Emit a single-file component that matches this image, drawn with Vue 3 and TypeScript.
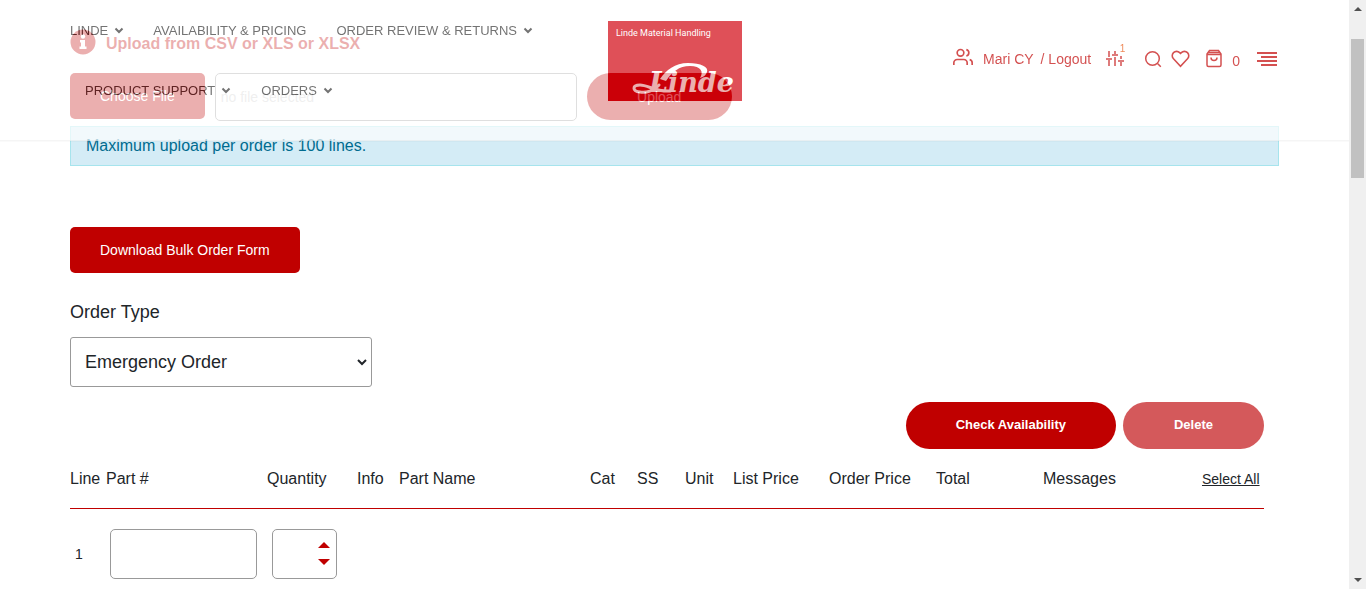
<script setup lang="ts">
import { ref } from 'vue'

interface NavItem { label: string; menu: boolean }
interface Column { label: string; width: number }

const nav: NavItem[] = [
  { label: 'LINDE', menu: true },
  { label: 'AVAILABILITY & PRICING', menu: false },
  { label: 'ORDER REVIEW & RETURNS', menu: true },
  { label: 'PRODUCT SUPPORT', menu: true },
  { label: 'ORDERS', menu: true },
]

const columns: Column[] = [
  { label: 'Line', width: 36 },
  { label: 'Part #', width: 161 },
  { label: 'Quantity', width: 90 },
  { label: 'Info', width: 42 },
  { label: 'Part Name', width: 191 },
  { label: 'Cat', width: 47 },
  { label: 'SS', width: 48 },
  { label: 'Unit', width: 48 },
  { label: 'List Price', width: 96 },
  { label: 'Order Price', width: 107 },
  { label: 'Total', width: 107 },
  { label: 'Messages', width: 159 },
]
const lastWidth = 62
const total = columns.reduce((sum, c) => sum + c.width, lastWidth)
const share = (w: number) => ({ width: (w / total) * 100 + '%' })

const orderType = ref('Emergency Order')
const part = ref('')
const quantity = ref<number | null>(null)
const fileName = ref('no file selected')

function step(by: number) {
  quantity.value = Math.max(0, (quantity.value || 0) + by)
}
function pick(e: Event) {
  const files = (e.target as HTMLInputElement).files
  fileName.value = files && files.length ? files[0].name : 'no file selected'
}
</script>

<template>
  <div class="page">
    <header class="header">
      <div class="bar">
        <nav aria-label="Main">
          <ul class="nav">
            <li v-for="item in nav" :key="item.label">
              <a href="#">{{ item.label }}
                <svg v-if="item.menu" class="chev" viewBox="0 0 10 8" width="10" height="8" aria-hidden="true">
                  <path d="M1.5 2.500 L5 6 L8.5 2.500" />
                </svg>
              </a>
            </li>
          </ul>
        </nav>

        <a href="#" class="logo" aria-label="Linde Material Handling">
          <svg viewBox="0 0 134 80" width="134" height="80">
            <rect width="134" height="80" fill="#d0000c" />
            <text x="8" y="15" class="logo-small">Linde Material Handling</text>
            <text x="41" y="71" class="logo-big">Linde</text>
            <path d="M52 58 C58 49 67 42 80 42 C93 42 101 46 99 51 C98 54 96 56 92 57 C96 51 93 45 82 45 C71 45 64 51 58 60 Z" fill="#fff" />
            <path d="M51 64 C46 70 38 72 32 71 C24 70 24 64 32 64 C40 64 48 71 62 70" fill="none" stroke="#fff" stroke-width="3" stroke-linecap="round" />
          </svg>
        </a>

        <div class="tools">
          <a href="#" class="user" aria-label="Account">
            <svg class="line bold" viewBox="0 0 24 24" width="20" height="20">
              <path d="M17 21.500v-2.500a4 4 0 0 0-4-4H5a4 4 0 0 0-4 4v2.500M23 21.500v-2.500a4 4 0 0 0-3-3.870M16 3.130a4 4 0 0 1 0 7.750" />
              <circle cx="9" cy="7" r="4" />
            </svg>
          </a>
          <a href="#" class="name">Mari CY</a>
          <a href="#" class="logout">/ Logout</a>
          <a href="#" class="compare" aria-label="Compare">
            <svg class="line" viewBox="0 0 20 20" width="20" height="20">
              <path d="M4 2v6M4 11v6M1 10h6M10 2v3M10 8v9M7 6h6M16 7v3M16 13v4M13 12h6" />
            </svg>
            <span class="badge">1</span>
          </a>
          <a href="#" class="search" aria-label="Search">
            <svg class="line" viewBox="0 0 18 18" width="18" height="18">
              <circle cx="8.500" cy="8.500" r="6.800" /><path d="M13.500 13.500L16.800 16.800" />
            </svg>
          </a>
          <a href="#" class="heart" aria-label="Wish list">
            <svg class="line bold" viewBox="0 0 24 24" width="19" height="19">
              <path d="M20.840 4.610a5.500 5.500 0 0 0-7.780 0L12 5.670l-1.060-1.060a5.500 5.500 0 0 0-7.780 7.780L12 21.800l8.840-9.410a5.500 5.500 0 0 0 0-7.780z" />
            </svg>
          </a>
          <a href="#" class="cart" aria-label="Cart">
            <svg class="line" viewBox="0 0 18 20" width="18" height="20">
              <path d="M4.500 1.500h9L16 5v11a1.500 1.500 0 0 1-1.500 1.500h-11A1.500 1.500 0 0 1 2 16V5zM2 5.500h14M3.500 3.500h11M6 8.500a3 3 0 0 0 6 0" />
            </svg>
            <span>0</span>
          </a>
          <button type="button" class="menu" aria-label="Menu">
            <svg viewBox="0 0 20 16" width="20" height="16">
              <path d="M0 2h20M4 6h16M0 10h20M4 14h16" stroke="#c00000" stroke-width="2" />
            </svg>
          </button>
        </div>
      </div>
    </header>

    <main class="content">
      <h2 class="title">
        <svg viewBox="0 0 26 26" width="26" height="26" aria-hidden="true">
          <circle cx="13" cy="13" r="12.500" fill="#c00000" />
          <circle cx="13" cy="7.500" r="2.200" fill="#fff" />
          <path d="M10 11h5v6.500h1.500V20h-7v-2.500H11v-4h-1z" fill="#fff" />
        </svg>
        <span>Upload from CSV or XLS or XLSX</span>
      </h2>
      <form class="upload" @submit.prevent>
        <label for="order-file" class="choose">Choose File</label>
        <input id="order-file" type="file" class="hidden" @change="pick" />
        <input class="file" type="text" :value="fileName" readonly aria-label="Selected file" />
        <button type="submit" class="pill send">Upload</button>
      </form>
      <p class="alert">Maximum upload per order is 100 lines.</p>

      <button type="button" class="download">Download Bulk Order Form</button>

      <label class="type-label" for="order-type">Order Type</label>
      <div class="type">
        <select id="order-type" v-model="orderType">
          <option>Emergency Order</option>
          <option>Stock Order</option>
        </select>
        <svg viewBox="0 0 10 8" width="10" height="8" aria-hidden="true"><path d="M1 2 L5 6 L9 2" /></svg>
      </div>

      <section class="order">
        <div class="actions">
          <button type="button" class="pill">Check Availability</button>
          <button type="button" class="pill faded">Delete</button>
        </div>
        <table>
          <colgroup>
            <col v-for="c in columns" :key="c.label" :style="share(c.width)" />
            <col :style="share(lastWidth)" />
          </colgroup>
          <thead>
            <tr>
              <th v-for="c in columns" :key="c.label" scope="col">{{ c.label }}</th>
              <th scope="col"><a href="#" class="all">Select All</a></th>
            </tr>
          </thead>
          <tbody>
            <tr>
              <td class="num">1</td>
              <td class="part"><input v-model="part" type="text" aria-label="Part number" /></td>
              <td class="qty">
                <div class="stepper">
                  <input v-model.number="quantity" type="text" inputmode="numeric" aria-label="Quantity" />
                  <div class="arrows">
                    <button type="button" aria-label="Increase" @click="step(1)">
                      <svg viewBox="0 0 12 6" width="12" height="6"><path d="M0 6L6 0L12 6z" /></svg>
                    </button>
                    <button type="button" aria-label="Decrease" @click="step(-1)">
                      <svg viewBox="0 0 12 6" width="12" height="6"><path d="M0 0L6 6L12 0z" /></svg>
                    </button>
                  </div>
                </div>
              </td>
              <td colspan="10"></td>
            </tr>
          </tbody>
        </table>
      </section>
    </main>

    <div class="scroll" aria-hidden="true">
      <svg viewBox="0 0 8 4" width="8" height="4"><path d="M0 4L4 0L8 4z" /></svg>
      <div class="track"><div class="thumb"></div></div>
      <svg viewBox="0 0 8 4" width="8" height="4"><path d="M0 0L4 4L8 0z" /></svg>
    </div>
  </div>
</template>

<style>
body { margin: 0; background: #fff; }
</style>

<style scoped>
.page {
  display: grid;
  grid-template-columns: minmax(0, 1fr) 17px;
  height: 100vh;
  overflow: hidden;
  font-family: "Liberation Sans", Arial, sans-serif;
  color: #212529;
}
.page * { box-sizing: border-box; }
button, input, select { font-family: inherit; margin: 0; }
button { cursor: pointer; border: 0; }
a { color: inherit; text-decoration: none; }
svg { display: block; flex: none; }

.header {
  position: fixed;
  top: 0;
  left: 0;
  right: 17px;
  z-index: 2;
  background: #fff;
  opacity: 0.69;
  border-bottom: 1px solid #f0f0f0;
  box-shadow: 0 1px 1px rgba(0, 0, 0, 0.03);
}
.bar {
  display: grid;
  grid-template-columns: minmax(0, 1fr) auto minmax(0, 1fr);
  max-width: 1209px;
  height: 140px;
  margin: 0 auto;
}
.nav {
  display: flex;
  flex-wrap: wrap;
  list-style: none;
  margin: 0;
  padding: 0;
}
.nav li { padding: 0 15px; }
.nav li:first-child { padding-left: 0; padding-right: 14px; }
.nav a {
  display: flex;
  align-items: center;
  gap: 6px;
  height: 60px;
  font-size: 13px;
  color: #333;
}
.chev path, .type path { fill: none; stroke: #333; stroke-width: 2; }
.logo { padding-top: 21px; }
.logo-small { font: 9px Roboto, sans-serif; fill: #fff; }
.logo-big { font: italic bold 27px "DejaVu Serif", serif; fill: #fff; }

.tools {
  display: flex;
  justify-content: flex-end;
  align-items: center;
  height: 118px;
  padding-right: 2px;
  font-size: 14px;
  color: #c00000;
}
.line { fill: none; stroke: #c00000; stroke-width: 1.5; }
.bold { stroke-width: 2; }
.user { margin-right: 10px; padding-bottom: 5px; }
.name { margin-right: 7px; }
.logout { margin-right: 14px; }
.compare { position: relative; margin-right: 19px; }
.badge { position: absolute; right: 0; top: -6px; font-size: 10px; line-height: 12px; color: #e8540c; }
.search { margin-right: 9px; }
.heart { margin-right: 15px; padding-bottom: 2px; }
.cart { display: flex; align-items: center; gap: 9px; margin-right: 17px; }
.cart span { padding-top: 3px; }
.menu { padding: 0; background: none; }

.content {
  width: 100%;
  max-width: 1209px;
  margin: 0 auto;
  padding-top: 29px;
}
.title {
  display: flex;
  align-items: center;
  gap: 10px;
  height: 26px;
  margin: 0 0 18px;
  font-size: 16px;
  color: #c00000;
}
.title span { padding-top: 3px; }
.upload { display: flex; align-items: flex-start; gap: 10px; height: 53px; }
.choose, .download {
  display: block;
  height: 46px;
  padding: 0 30px;
  border-radius: 5px;
  background: #c00000;
  color: #fff;
  font-size: 14px;
  line-height: 46px;
}
.hidden { position: absolute; width: 1px; height: 1px; opacity: 0; }
.file {
  width: 362px;
  height: 48px;
  padding: 0 5px;
  border: 1px solid #999;
  border-radius: 5px;
  font-size: 14px;
  color: #ccc;
}
.pill {
  height: 47px;
  padding: 0 50px 2px;
  border-radius: 24px;
  background: #c00000;
  color: #fff;
  font-size: 13px;
  font-weight: bold;
}
.send { min-width: 145px; padding-bottom: 0; font-size: 14px; font-weight: normal; }
.alert {
  margin: 0 0 61px;
  padding: 0 15px;
  border: 1px solid #a6e4ed;
  background: #d4ecf6;
  color: #006b8f;
  font-size: 16px;
  line-height: 38px;
}
.type-label { display: block; margin: 27px 0 13px; font-size: 18px; line-height: 24px; }
.type { display: grid; align-items: center; width: 302px; margin-bottom: 15px; }
.type select, .type svg { grid-area: 1 / 1; }
.type svg { justify-self: end; margin-right: 5px; pointer-events: none; }
.type path { stroke: #212529; }
.type select {
  appearance: none;
  width: 100%;
  height: 50px;
  padding: 0 14px;
  border: 1px solid #999;
  border-radius: 3px;
  background: #fff;
  color: #212529;
  font-size: 18px;
}

.order { padding-right: 15px; }
.actions { display: flex; justify-content: flex-end; gap: 7px; }
.faded { min-width: 141px; background: #d4595b; }
table { width: 100%; table-layout: fixed; border-collapse: separate; border-spacing: 0; }
th {
  height: 60px;
  padding: 0;
  border-bottom: 1px solid #c00000;
  font-size: 16px;
  font-weight: normal;
  text-align: left;
  white-space: nowrap;
}
.all { font-size: 14px; text-decoration: underline; }
td { padding: 20px 0 10px; font-size: 14px; }
.num { padding-left: 5px; }
.part { padding-left: 4px; padding-right: 10px; }
.part input, .stepper {
  width: 100%;
  height: 50px;
  border: 1px solid #999;
  border-radius: 5px;
  background: #fff;
}
.part input { display: block; padding: 0 10px; font-size: 16px; }
.qty { padding-left: 5px; padding-right: 20px; }
.stepper { display: flex; align-items: center; padding-right: 6px; }
.stepper input {
  flex: 1;
  min-width: 0;
  height: 40px;
  padding: 0 0 0 10px;
  border: 0;
  background: none;
  font-size: 16px;
  outline: 0;
}
.arrows { display: grid; gap: 11px; padding-bottom: 1px; }
.arrows button { padding: 0; background: none; }
.arrows path { fill: #c00000; }

.scroll {
  display: flex;
  flex-direction: column;
  align-items: center;
  padding: 7px 2px;
  background: #f0f0f0;
}
.scroll path { fill: #505050; }
.track { flex: 1; align-self: stretch; padding-top: 28px; }
.thumb { height: 25%; min-height: 139px; background: #c1c1c1; }
</style>
